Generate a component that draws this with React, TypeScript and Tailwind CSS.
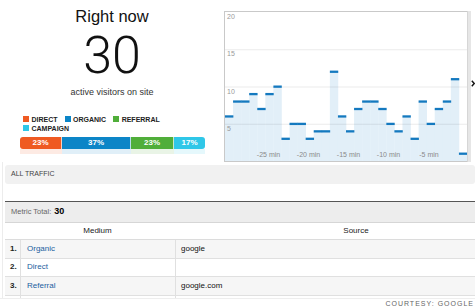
const values = [6, 8, 8, 9, 7, 9, 10, 3, 5, 5, 3, 4, 4, 12, 6, 4, 7, 8, 8, 7, 5, 4, 6, 3, 8, 5, 7, 8, 11, 1];

const segments = [
  { label: "23%", width: "w-[42px]", color: "bg-[#ef5a22]" },
  { label: "37%", width: "w-[69px]", color: "bg-[#0c85c7]" },
  { label: "23%", width: "w-[43px]", color: "bg-[#50ae3a]" },
  { label: "17%", width: "w-[31px]", color: "bg-[#2fc7e8]" },
];

const legend = [
  { label: "DIRECT", color: "bg-[#ef5a22]" },
  { label: "ORGANIC", color: "bg-[#0c85c7]" },
  { label: "REFERRAL", color: "bg-[#50ae3a]" },
  { label: "CAMPAIGN", color: "bg-[#2fc7e8]" },
];

const rows = [
  { n: "1.", medium: "Organic", source: "google" },
  { n: "2.", medium: "Direct", source: "" },
  { n: "3.", medium: "Referral", source: "google.com" },
  { n: "", medium: "", source: "" },
];

function Chart() {
  const w = 242;
  const h = 149;
  const bw = w / values.length;
  const unit = h / 20;
  const y = (v: number) => h - v * unit;
  return (
    <svg width={w} height={h} className="block" fontFamily="'Liberation Sans', Arial, sans-serif">
      {values.map((v, i) => (
        <rect key={"f" + i} x={i * bw} y={y(v)} width={bw + 0.3} height={h - y(v)} fill="#e2eff8" />
      ))}
      {[15, 10, 5].map((g) => (
        <line key={g} x1={0} x2={w} y1={y(g) + 0.5} y2={y(g) + 0.5} stroke="#000" strokeOpacity={0.08} />
      ))}
      {values.map((v, i) => (
        <rect key={"t" + i} x={i * bw} y={y(v) - 1} width={bw + 0.3} height={2.3} fill="#1479bf" />
      ))}
      {[20, 15, 10, 5].map((g) => (
        <text key={"l" + g} x={2} y={y(g) + 7} fontSize={7} fill="#9a9a9a">
          {g}
        </text>
      ))}
      {[
        ["-25 min", 43.5],
        ["-20 min", 83.5],
        ["-15 min", 123.5],
        ["-10 min", 163.5],
        ["-5 min", 204],
      ].map(([t, x]) => (
        <text key={t as string} x={x as number} y={144.5} fontSize={7} fill="#8a8a8a" textAnchor="middle">
          {t}
        </text>
      ))}
    </svg>
  );
}

export default function App() {
  return (
    <div className="w-[475px] h-[307px] bg-white overflow-hidden flex flex-col font-['Liberation_Sans',Arial,sans-serif] text-[#222]">
      <div className="flex h-[162px] shrink-0">
        <div className="w-[224px] flex flex-col">
          <div className="mt-[8px] text-center text-[16.5px] leading-[17px] text-[#111]">Right now</div>
          <div className="mt-[5.4px] text-center text-[52px] leading-[52px] font-light font-['Roboto',sans-serif] text-[#111]">
            30
          </div>
          <div className="mt-[5.3px] text-center text-[9px] leading-[9px] text-[#333]">active visitors on site</div>
          <div className="mt-[18px] ml-[23px] w-[170px] flex flex-wrap">
            {legend.map((l) => (
              <div key={l.label} className="flex items-center h-[9px] mr-[7px]">
                <span className={`w-[6px] h-[6px] mr-[2.5px] ${l.color}`} />
                <span className="text-[7px] font-bold leading-none text-[#222]">{l.label}</span>
              </div>
            ))}
          </div>
          <div className="mt-[4px] ml-[20px] flex h-[12px] rounded-[3px] overflow-hidden w-[185px]">
            {segments.map((s, i) => (
              <div
                key={i}
                className={`${s.width} ${s.color} flex items-center justify-center text-[8px] font-bold text-white border-r border-white/70 last:border-r-0`}
              >
                {s.label}
              </div>
            ))}
          </div>
          <div className="ml-[20px] flex h-[5px] w-[185px] opacity-[0.12]">
            {segments.map((s, i) => (
              <div key={i} className={`${s.width} ${s.color}`} />
            ))}
          </div>
        </div>
        <div className="flex pt-[11px]">
          <div className="border-l border-t border-b border-[#c9c9c9] h-[151px]">
            <Chart />
          </div>
          <div className="w-[4px] h-[151px] bg-[#e6e6e6] border-l border-[#d6d6d6]" />
          <div className="w-[4px] flex items-center pb-[6px]">
            <svg width="4" height="7" viewBox="0 0 4 7">
              <path d="M0.8 0.8 L3.2 3.5 L0.8 6.2" fill="none" stroke="#111" strokeWidth="1.4" />
            </svg>
          </div>
        </div>
      </div>

      <div className="flex-1 overflow-hidden ml-[2px] border-l border-[#ececec] pl-[2px] pt-[3px]">
        <div className="h-[19px] rounded-[3px] bg-[#f1f1f1] flex items-center pl-[6px] text-[7px] text-[#444]">
          ALL TRAFFIC
        </div>
        <div className="mt-[17px] w-[532px] border-t border-[#555]">
          <div className="h-[21px] bg-[#ededed] border-b border-[#d6d6d6] flex items-center pl-[6px]">
            <span className="text-[7.5px] text-[#666]">Metric Total:</span>
            <span className="ml-[3px] text-[9px] font-bold text-black">30</span>
          </div>
          <div className="h-[17px] border-b border-[#dcdcdc] flex items-center text-[8px] text-[#222]">
            <div className="w-[15px]" />
            <div className="w-[155px] text-center">Medium</div>
            <div className="flex-1 text-center">Source</div>
          </div>
          {rows.map((r, i) => (
            <div
              key={i}
              className={`h-[18.5px] border-b border-[#e0e0e0] flex text-[8px] ${i % 2 === 0 ? "bg-[#f6f6f6]" : "bg-white"}`}
            >
              <div className="w-[15px] flex items-center pl-[5px] font-bold text-[#222]">{r.n}</div>
              <div className="w-[155px] border-l border-[#e0e0e0] flex items-center pl-[6px] text-[#22609e]">
                {r.medium}
              </div>
              <div className="flex-1 border-l border-[#e0e0e0] flex items-center pl-[5px] text-[#111]">{r.source}</div>
            </div>
          ))}
        </div>
      </div>

      <div className="h-[9px] shrink-0 bg-white border-t border-[#eee] flex items-center justify-end pr-[1px]">
        <span className="text-[7px] leading-none tracking-[1px] text-[#666]">COURTESY: GOOGLE</span>
      </div>
    </div>
  );
}
